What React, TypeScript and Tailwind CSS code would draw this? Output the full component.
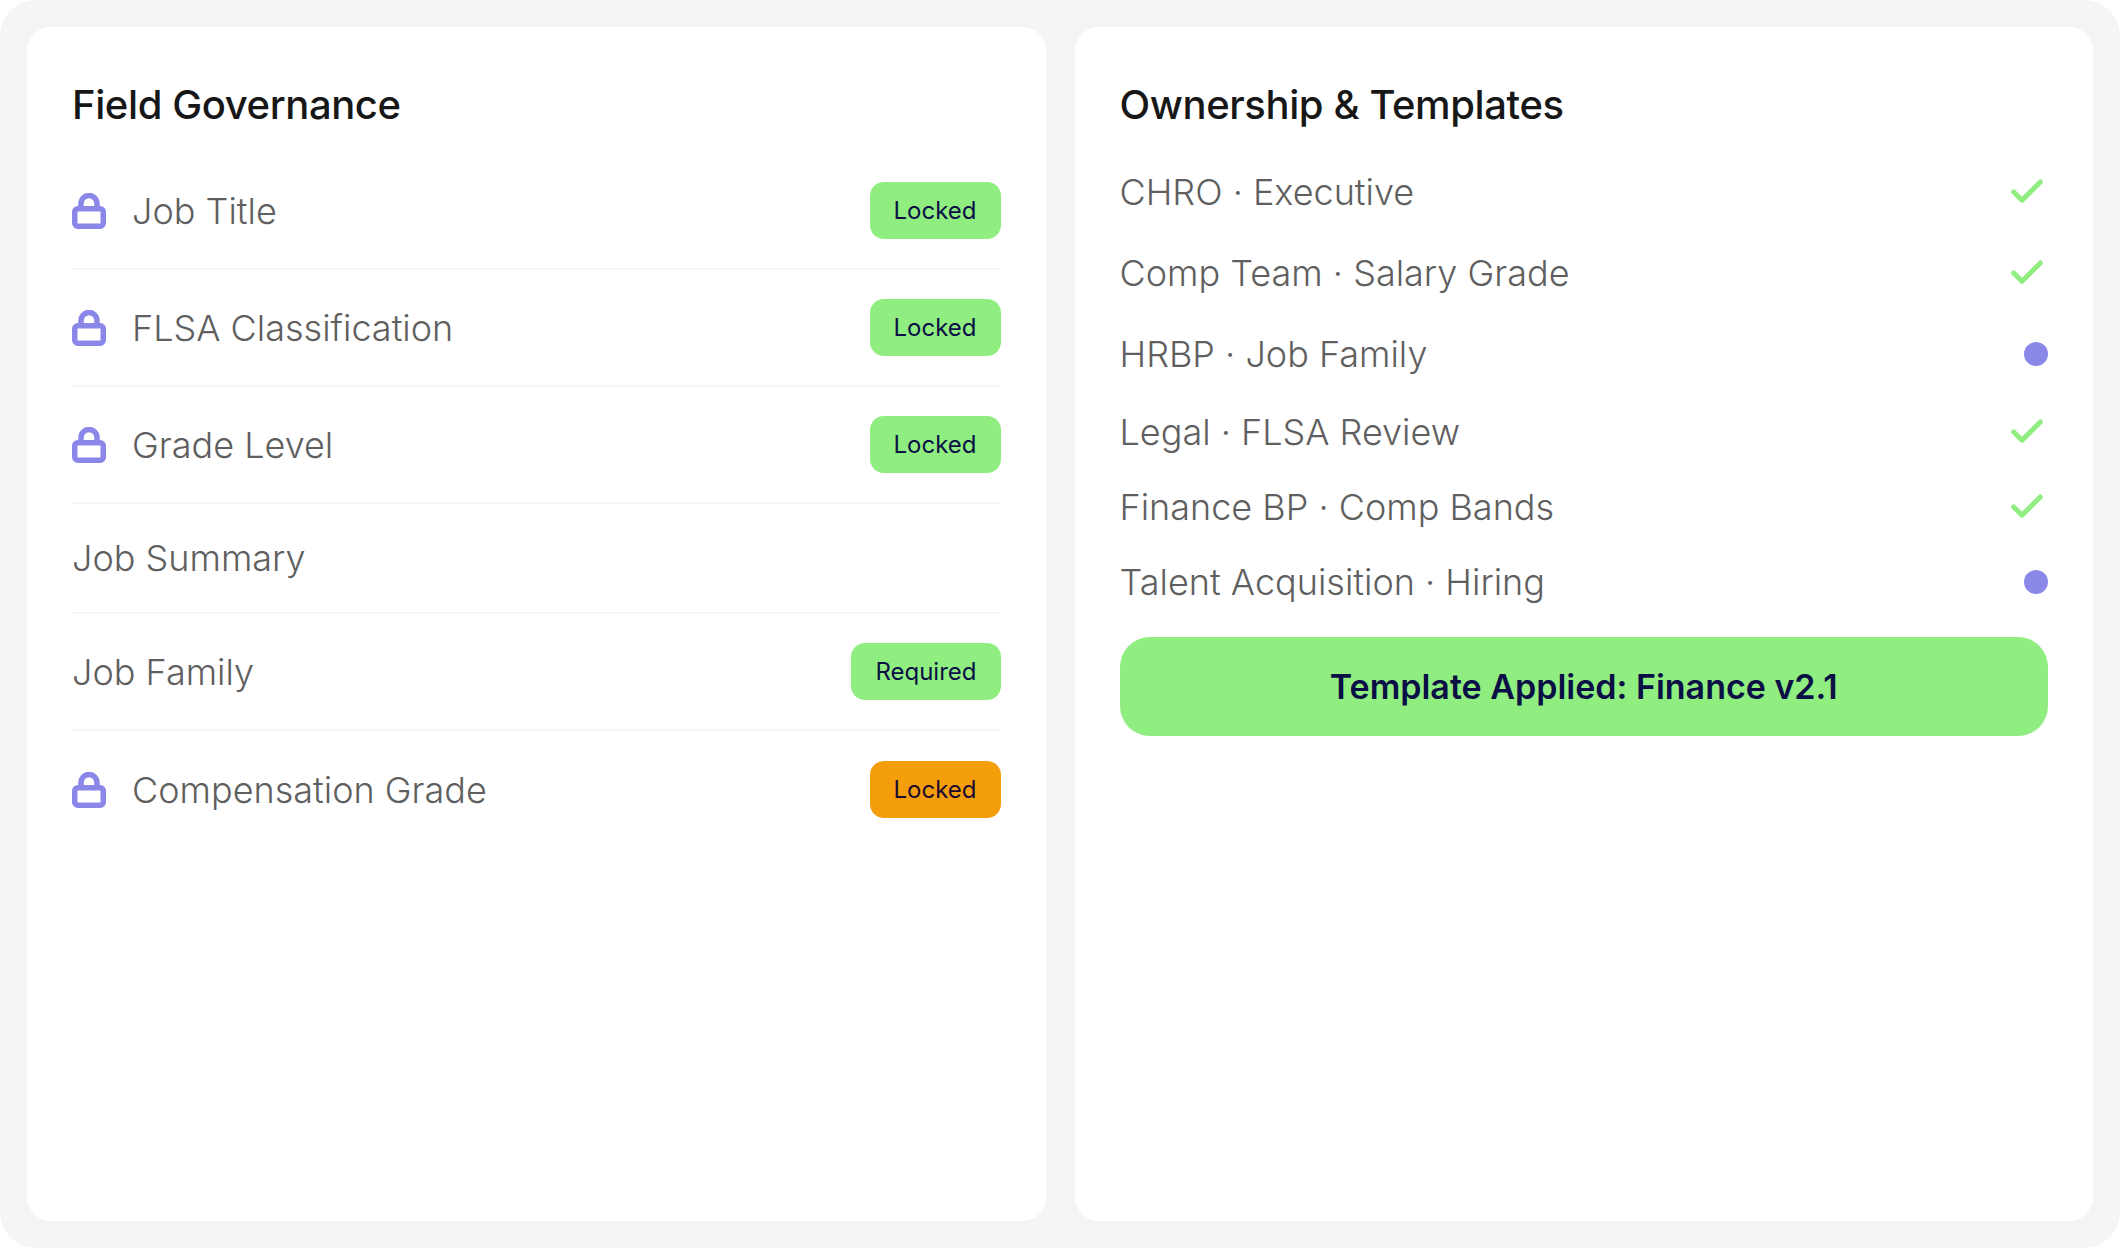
import { Check } from "lucide-react";

const fields = [
  { name: "Job Title", lock: true, badge: "Locked" },
  { name: "FLSA Classification", lock: true, badge: "Locked" },
  { name: "Grade Level", lock: true, badge: "Locked" },
  { name: "Job Summary", lock: false },
  { name: "Job Family", lock: false, badge: "Required" },
  { name: "Compensation Grade", lock: true, badge: "Locked", warn: true },
];

const owners = [
  { name: "CHRO · Executive", done: true, rowClass: "h-[81px]" },
  { name: "Comp Team · Salary Grade", done: true, rowClass: "h-[81px]" },
  { name: "HRBP · Job Family", done: false, rowClass: "h-[81px]" },
  { name: "Legal · FLSA Review", done: true, rowClass: "h-[75px]" },
  { name: "Finance BP · Comp Bands", done: true, rowClass: "h-[75px]" },
  { name: "Talent Acquisition · Hiring", done: false, rowClass: "h-[75px]" },
];

const LockIcon = () => (
  <svg width="34" height="36" viewBox="0 0 34 36" fill="none" className="shrink-0">
    <path d="M9 16V10.5a8 8 0 0 1 16 0V16" stroke="#8b87e8" strokeWidth="5.5" />
    <rect x="2.75" y="15.75" width="28.5" height="17.5" rx="3" stroke="#8b87e8" strokeWidth="5.5" />
  </svg>
);

const Badge = ({ label, warn }: { label: string; warn?: boolean }) => (
  <span
    className={`flex h-[57px] items-center rounded-[14px] px-6 text-[24px] leading-none ${
      warn ? "bg-[#f59e0b] text-[#1c0a2e]" : "bg-[#90ee80] text-[#0a1045]"
    }`}
  >
    {label}
  </span>
);

export default function App() {
  return (
    <div className="h-[1248px] w-[2120px] bg-white font-['Inter',sans-serif]">
      <div className="grid h-full grid-cols-2 gap-[29px] rounded-[36px] bg-[#f5f5f5] p-[27px]">
        <section className="rounded-[24px] bg-white px-[45px] pt-[54px]">
          <h2 className="text-[40px] font-medium leading-[48px] tracking-[-0.4px] text-[#171717]">Field Governance</h2>
          <div className="mt-[24px]">
            {fields.map((f, i) => (
              <div
                key={f.name}
                className={`flex items-center justify-between ${
                  i < fields.length - 1 ? "border-b-[2px] border-[#f5f5f5]" : ""
                } ${f.badge ? "h-[117px]" : "h-[110px]"}`}
              >
                <div className="flex items-center gap-[26px]">
                  {f.lock && <LockIcon />}
                  <span className="text-[36px] font-light text-[#5f5f5f]">{f.name}</span>
                </div>
                {f.badge && <Badge label={f.badge} warn={f.warn} />}
              </div>
            ))}
          </div>
        </section>
        <section className="rounded-[24px] bg-white px-[45px] pt-[54px]">
          <h2 className="text-[40px] font-medium leading-[48px] tracking-[-0.4px] text-[#171717]">Ownership &amp; Templates</h2>
          <div className="mt-[22px]">
            {owners.map((o) => (
              <div key={o.name} className={`flex items-center justify-between ${o.rowClass}`}>
                <span className="text-[36px] font-light text-[#5f5f5f]">{o.name}</span>
                {o.done ? (
                  <Check size={40} strokeWidth={3} className="mr-[1px] text-[#90ee80]" />
                ) : (
                  <span className="h-6 w-6 rounded-full bg-[#8b87e8]" />
                )}
              </div>
            ))}
          </div>
          <div className="mt-[18px] flex h-[99px] items-center justify-center rounded-[30px] bg-[#90ee80] text-[34px] font-semibold text-[#0a1045]">
            Template Applied: Finance v2.1
          </div>
        </section>
      </div>
    </div>
  );
}
